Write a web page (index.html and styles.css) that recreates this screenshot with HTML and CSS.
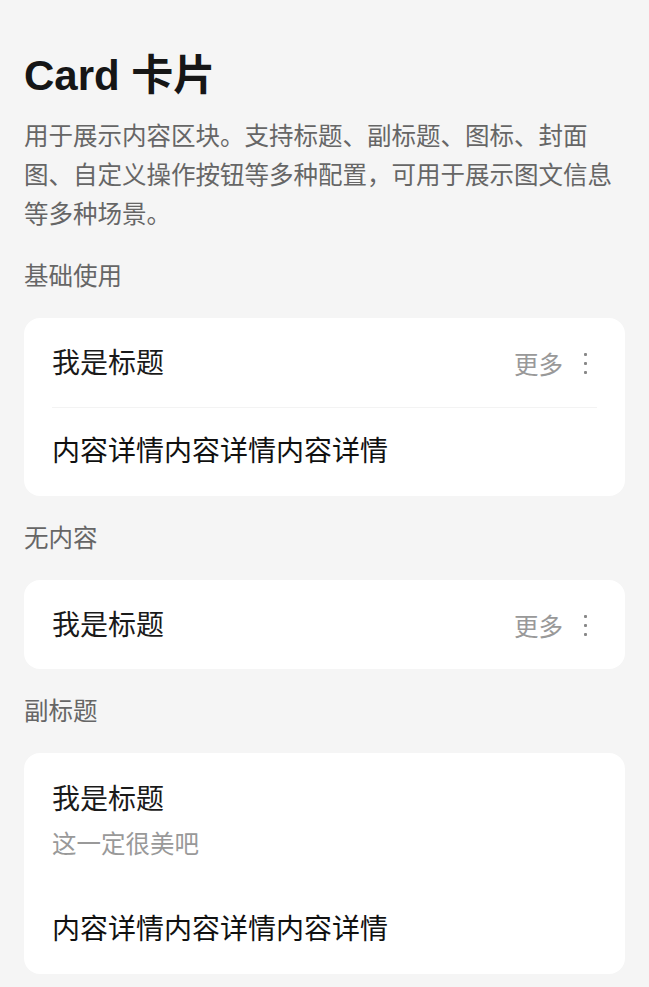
FILE: index.html
```html
<!DOCTYPE html>
<html lang="zh-CN">
<head>
    <meta charset="UTF-8">
    <meta content="width=device-width" name="viewport">
    <title>Card 卡片</title>
    <link rel="stylesheet" href="styles.css">
</head>
<body>
    <div class="page">
        <h1 class="page-title">Card 卡片</h1>
        <p class="page-desc">用于展示内容区块。支持标题、副标题、图标、封面图、自定义操作按钮等多种配置，可用于展示图文信息等多种场景。</p>

        <h3 class="demo-title">基础使用</h3>
        <div class="card">
            <div class="card-header">
                <span class="card-title">我是标题</span>
                <a class="card-more">更多 <i class="more-icon"><b></b><b></b><b></b></i></a>
            </div>
            <div class="card-divider"></div>
            <div class="card-body">内容详情内容详情内容详情</div>
        </div>

        <h3 class="demo-title">无内容</h3>
        <div class="card">
            <div class="card-header">
                <span class="card-title">我是标题</span>
                <a class="card-more">更多 <i class="more-icon"><b></b><b></b><b></b></i></a>
            </div>
        </div>

        <h3 class="demo-title">副标题</h3>
        <div class="card">
            <div class="card-header with-sub">
                <span class="card-title">我是标题</span>
                <span class="card-subtitle">这一定很美吧</span>
            </div>
            <div class="card-body">内容详情内容详情内容详情</div>
        </div>
    </div>
</body>
</html>
```

FILE: styles.css
```css
* {
    margin: 0;
    padding: 0;
    box-sizing: border-box;
}
html, body {
    background-color: #f5f5f5;
}
body {
    font-family: "Liberation Sans", "Noto Sans CJK SC", sans-serif;
    color: #1a1a1a;
}
.page {
    padding: 48px 24px 40px;
}

.page-title {
    font-size: 42px;
    line-height: 56px;
    font-weight: 700;
    color: #161616;
}
.page-desc {
    margin-top: 13px;
    font-size: 24.5px;
    line-height: 39px;
    color: #666;
}

.demo-title {
    margin: 26px 0 24px;
    font-size: 24.5px;
    line-height: 34px;
    font-weight: 400;
    color: #666;
}

.card {
    background-color: #fff;
    border-radius: 16px;
    overflow: hidden;
}
.card-header {
    height: 89px;
    padding: 2px 28px 0;
    display: flex;
    align-items: center;
    justify-content: space-between;
}
.card-header.with-sub {
    height: auto;
    padding: 30px 28px 24px;
    flex-direction: column;
    align-items: flex-start;
    justify-content: flex-start;
}
.card-title {
    font-size: 28px;
    line-height: 34px;
    color: #1a1a1a;
}
.card-subtitle {
    margin-top: 11px;
    font-size: 24.5px;
    line-height: 34px;
    color: #999;
}
.card-more {
    display: flex;
    align-items: center;
    gap: 10px;
    font-size: 24.5px;
    color: #999;
    text-decoration: none;
}
.more-icon {
    width: 24px;
    height: 24px;
    display: flex;
    flex-direction: column;
    align-items: center;
    justify-content: center;
    gap: 6px;
}
.more-icon b {
    display: block;
    width: 3px;
    height: 3px;
    border-radius: 1px;
    background-color: #888;
}
.card-divider {
    height: 1px;
    margin: 0 28px;
    background-color: #f3f3f3;
}
.card-body {
    padding: 30px 28px;
    font-size: 28px;
    line-height: 28px;
    color: #111;
}
```
